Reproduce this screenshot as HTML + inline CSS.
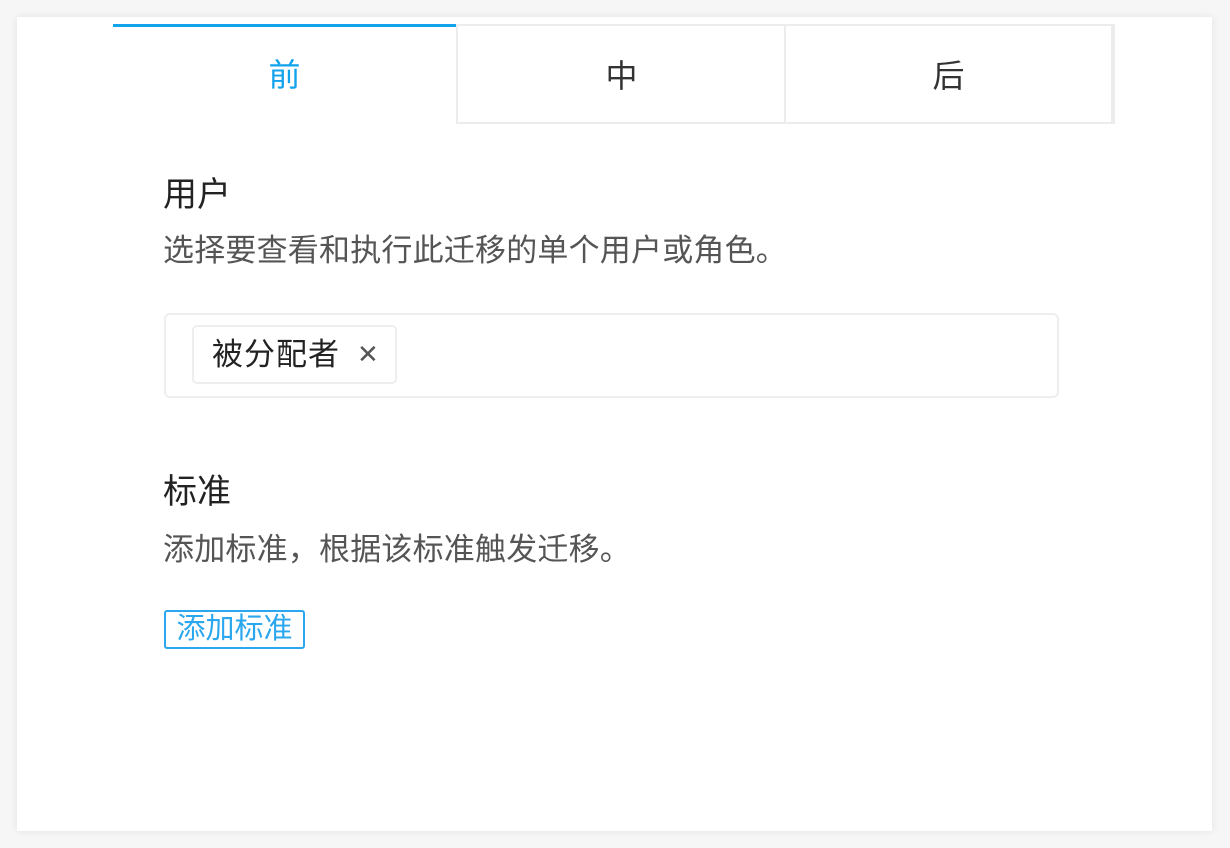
<!DOCTYPE html>
<html><head><meta charset="utf-8"><style>
body{margin:0;width:1230px;height:848px;background:#f6f6f6;font-family:"Liberation Sans","Noto Sans CJK SC",sans-serif;position:relative;overflow:hidden}
.card{position:absolute;left:17px;top:17px;width:1195px;height:814px;background:#fff;box-shadow:0 0 8px rgba(0,0,0,.08)}
.tab{position:absolute;top:24px;height:100px;box-sizing:border-box;text-align:center;line-height:100px;font-size:32px;color:#333}
.t1{left:113px;width:343px;border-top:3px solid #12a3ec;color:#12a3ec;line-height:96px}
.t2{left:456px;width:329px;border:2px solid #ececec;border-right:none}
.t3{left:784px;width:331px;border:2px solid #ececec;border-right:4px solid #ececec}
.a{position:absolute;left:163px;color:#222;line-height:40px;white-space:nowrap}
.h{font-size:34px}
.d{font-size:31px;color:#555;letter-spacing:0.2px}
.inp{position:absolute;left:164px;top:313px;width:895px;height:85px;box-sizing:border-box;border:2px solid #eee;border-radius:6px}
.chip{position:absolute;left:192px;top:325px;width:205px;height:59px;box-sizing:border-box;border:2px solid #eee;border-radius:5px;font-size:31px;line-height:55px;padding-left:18px;color:#222;letter-spacing:1px}
.chip span{position:absolute;left:163px;top:0;font-size:26px;color:#555}
.btn{position:absolute;left:164px;top:610px;width:141px;height:39px;box-sizing:border-box;border:2px solid #2aa7ee;border-radius:3px;color:#2aa7ee;font-size:29px;line-height:34px;text-align:center;white-space:nowrap}
</style></head><body>
<div class="card"></div>
<div class="tab t1">前</div>
<div class="tab t2">中</div>
<div class="tab t3">后</div>
<div class="a h" style="top:175px">用户</div>
<div class="a d" style="top:231px">选择要查看和执行此迁移的单个用户或角色。</div>
<div class="inp"></div>
<div class="chip">被分配者<span>✕</span></div>
<div class="a h" style="top:472px">标准</div>
<div class="a d" style="top:530px">添加标准，根据该标准触发迁移。</div>
<div class="btn">添加标准</div>
</body></html>
